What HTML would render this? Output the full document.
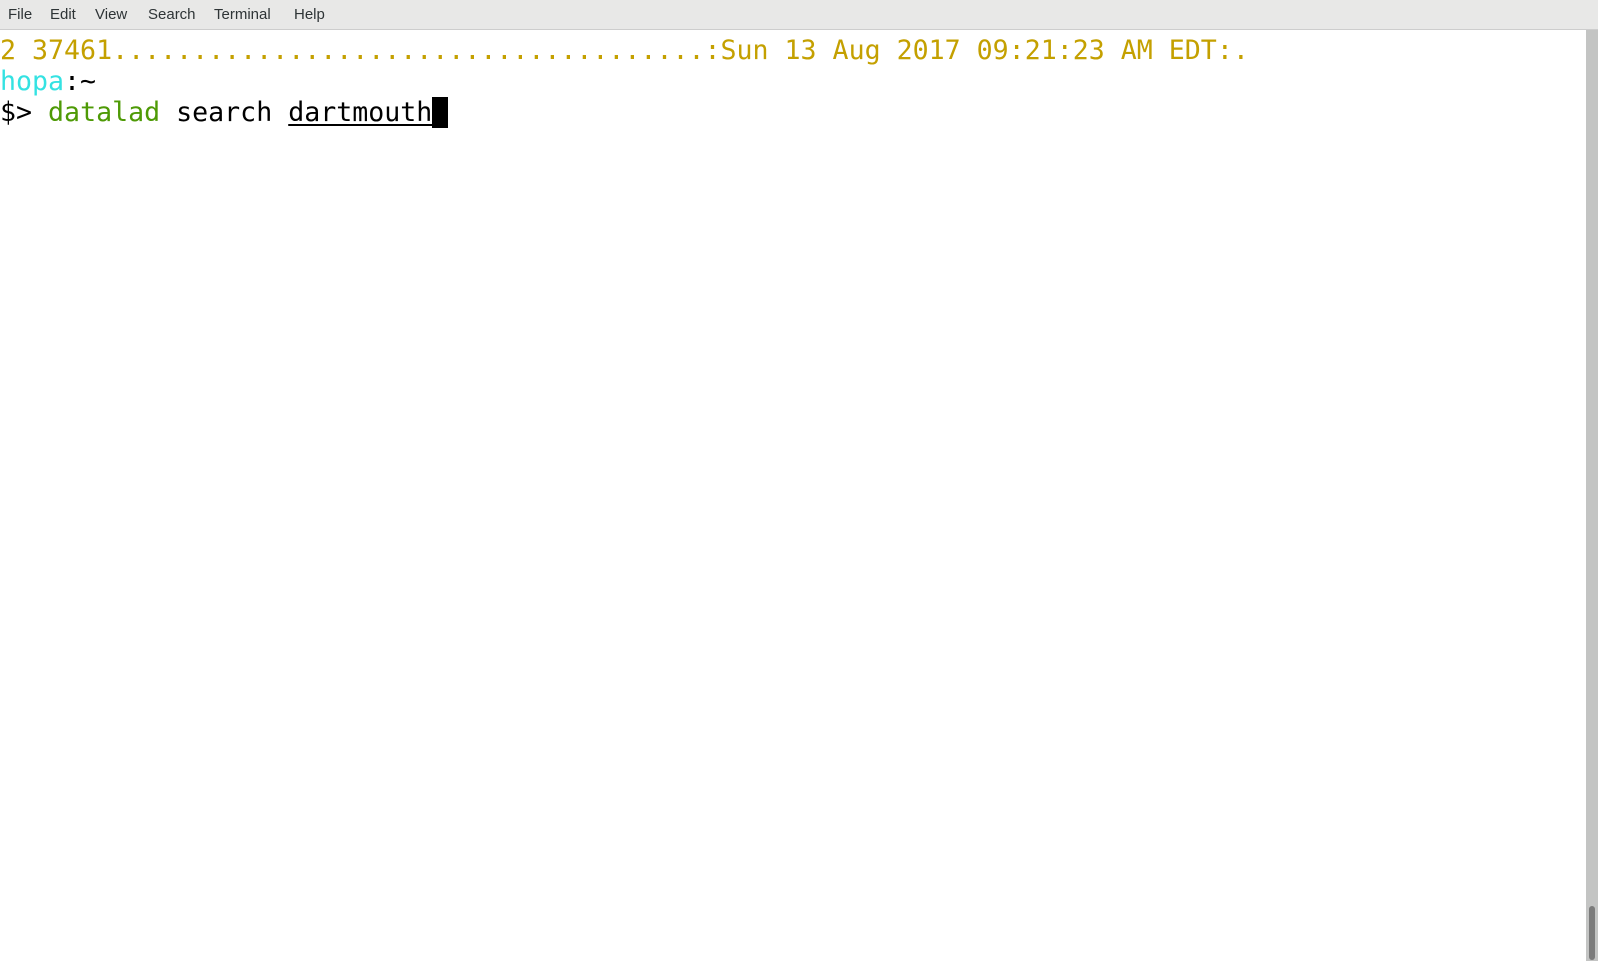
<!DOCTYPE html>
<html><head><meta charset="utf-8"><style>
html,body{margin:0;padding:0;width:1598px;height:961px;overflow:hidden;background:#fff;}
#menu{position:absolute;left:0;top:0;width:1598px;height:29px;background:#e8e8e7;border-bottom:1px solid #cdcdcd;font-family:"Liberation Sans",sans-serif;font-size:15px;color:#2e3436;}
#menu span{position:absolute;top:6px;}
#term{position:absolute;left:0;top:35px;font-family:"DejaVu Sans Mono","Liberation Mono",monospace;font-size:26.6px;line-height:31px;white-space:pre;color:#000;}
.y{color:#c4a000}.c{color:#34e2e2}.g{color:#4e9a06}
.u{text-decoration:underline;text-underline-offset:3px;text-decoration-thickness:2px}
.cur{background:#000;color:#fff}
#sb{position:absolute;left:1586px;top:30px;width:12px;height:931px;background:#c3c4c3;}
#th{position:absolute;left:1589px;top:906px;width:6px;height:54px;background:#7b7b7b;border-radius:3px;}
</style></head><body>
<div id="menu"><span style="left:8px">File</span><span style="left:50px">Edit</span><span style="left:95px">View</span><span style="left:148px">Search</span><span style="left:214px">Terminal</span><span style="left:294px">Help</span></div>
<div id="term"><span class="y">2 37461.....................................:Sun 13 Aug 2017 09:21:23 AM EDT:.</span>
<span class="c">hopa</span>:~
$&gt; <span class="g">datalad</span> search <span class="u">dartmouth</span><span class="cur"> </span></div>
<div id="sb"></div><div id="th"></div>
</body></html>
